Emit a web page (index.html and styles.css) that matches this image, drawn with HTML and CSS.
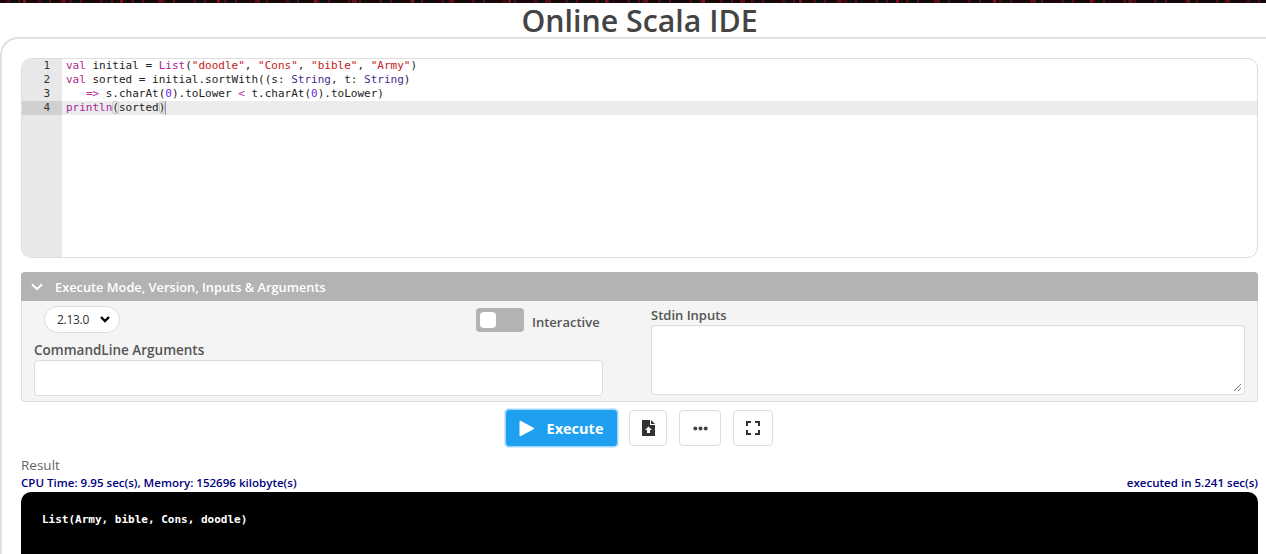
FILE: index.html
```html
<!DOCTYPE html>
<html lang="en">
<head>
<meta charset="utf-8">
<title>Online Scala IDE</title>
<link rel="stylesheet" href="styles.css">
</head>
<body>
<div class="topstrip"></div>
<h1 class="title">Online Scala IDE</h1>
<main class="card">
  <section class="editor">
    <div class="gutter">
      <div class="num">1</div><div class="num">2</div><div class="num">3</div><div class="num active">4</div>
    </div>
    <div class="code">
      <div class="line"><span class="kw">val</span> initial = <span class="fn">List</span>(<span class="str">"doodle"</span>, <span class="str">"Cons"</span>, <span class="str">"bible"</span>, <span class="str">"Army"</span>)</div>
      <div class="line"><span class="kw">val</span> sorted = initial.sortWith((s: <span class="ty">String</span>, t: <span class="ty">String</span>)</div>
      <div class="line">   <span class="kw">=&gt;</span> s.charAt(<span class="lit">0</span>).toLower <span class="kw">&lt;</span> t.charAt(<span class="lit">0</span>).toLower)</div>
      <div class="line active"><span class="fn">println</span><span class="br">(</span>sorted<span class="br">)</span><span class="cursor"></span></div>
    </div>
  </section>

  <section class="panel">
    <header class="panel-head">
      <svg class="chev" width="12" height="8" viewBox="0 0 12 8"><path d="M1 1.2 6 6.2 11 1.2" fill="none" stroke="#fff" stroke-width="2"/></svg>
      <span>Execute Mode, Version, Inputs &amp; Arguments</span>
    </header>
    <div class="panel-body">
      <div class="col-left">
        <div class="top-row">
          <div class="select"><span>2.13.0</span>
            <svg width="10" height="7" viewBox="0 0 10 7"><path d="M1 1 5 5 9 1" fill="none" stroke="#000" stroke-width="2.4"/></svg>
          </div>
          <div class="toggle-wrap">
            <div class="toggle"><div class="knob"></div></div>
            <span class="label interactive">Interactive</span>
          </div>
        </div>
        <div class="label args-label">CommandLine Arguments</div>
        <div class="field args"></div>
      </div>
      <div class="col-right">
        <div class="label">Stdin Inputs</div>
        <div class="field stdin">
          <svg class="grip" width="9" height="9" viewBox="0 0 9 9"><path d="M1 8 8 1M5 8 8 5" stroke="#777" stroke-width="1" fill="none"/></svg>
        </div>
      </div>
    </div>
  </section>

  <div class="actions">
    <button class="exec">
      <svg width="16" height="17" viewBox="0 0 16 17"><path d="M1 1 15 8.5 1 16Z" fill="#fff" stroke="#fff" stroke-linejoin="round"/></svg>
      <span>Execute</span>
    </button>
    <button class="icon-btn b1">
      <svg width="13" height="16" viewBox="0 0 13 16"><path d="M0 0H8V5H13V16H0Z M9 0 13 4H9Z" fill="#333"/><path d="M6.5 6.5 10 10H8V13H5V10H3Z" fill="#fff"/></svg>
    </button>
    <button class="icon-btn b2">
      <svg width="15" height="5" viewBox="0 0 15 5" fill="#444"><circle cx="2.3" cy="2.5" r="2"/><circle cx="7.5" cy="2.5" r="2"/><circle cx="12.7" cy="2.5" r="2"/></svg>
    </button>
    <button class="icon-btn b3">
      <svg width="14" height="14" viewBox="0 0 14 14"><path d="M1 5V1H5M9 1H13V5M13 9V13H9M5 13H1V9" fill="none" stroke="#333" stroke-width="2"/></svg>
    </button>
  </div>

  <section class="result">
    <div class="result-title">Result</div>
    <div class="stats"><span>CPU Time: 9.95 sec(s), Memory: 152696 kilobyte(s)</span><span>executed in 5.241 sec(s)</span></div>
    <div class="terminal"><span class="term-text">List(Army, bible, Cons, doodle)</span></div>
  </section>
</main>
</body>
</html>
```

FILE: styles.css
```css
* { box-sizing: border-box; }
html, body { margin: 0; padding: 0; height: 554px; overflow: hidden; background: #fff; }
body { font-family: "Open Sans", "Liberation Sans", sans-serif; color: #444; }

.topstrip {
  height: 3px;
  background:
    repeating-linear-gradient(90deg, transparent 0 23px, #7a0f20 23px 26px, transparent 26px 61px, #5a0c18 61px 66px, transparent 66px 97px),
    repeating-linear-gradient(90deg, #1a0507 0 7px, #430b14 7px 10px, #0d0d0d 10px 18px, #51101a 18px 20px, #150808 20px 31px);
}
.title {
  margin: 0;
  height: 34px;
  padding-left: 13px;
  text-align: center;
  font-size: 30.3px;
  line-height: 36px;
  font-weight: 600;
  color: #444;
}
.card {
  height: 530px;
  margin-right: -20px;
  border: 2px solid #e0e0e0;
  border-right: 0;
  border-bottom: 0;
  border-top-left-radius: 18px;
  border-top-right-radius: 18px;
  padding: 19px 28px 0 19px;
}

.editor {
  display: flex;
  height: 200px;
  border: 1px solid #ddd;
  border-radius: 10px;
  overflow: hidden;
  background: #fff;
}
.gutter { width: 40px; background: #e8e8e8; font: 11px/14px "DejaVu Sans Mono", monospace; color: #333; flex: none; }
.num { height: 14px; padding-right: 12px; text-align: right; }
.num.active { background: #d0d0d0; }
.code { flex: 1; font: 11px/14px "DejaVu Sans Mono", monospace; color: #222; }
.line { height: 14px; padding-left: 4px; white-space: pre; }
.line.active { background: #ececec; }
.kw { color: #b5288f; }
.fn { color: #a8249a; }
.str { color: #c41a1a; }
.ty { color: #4b2a8c; }
.lit { color: #6a2ae0; }
.br { outline: 1px solid #c4c4c4; outline-offset: -1px; border-radius: 3px; }
.cursor { display: inline-block; width: 1px; height: 14px; background: #999; vertical-align: top; }

.panel { margin-top: 14px; border: 1px solid #ddd; border-top: 0; border-radius: 4px; background: #f4f4f4; height: 130px; }
.panel-head {
  height: 29px;
  margin: 0 -1px;
  display: flex;
  align-items: center;
  gap: 12px;
  padding-left: 10px;
  background: #b3b3b3;
  border-radius: 4px 4px 0 0;
  color: #fff;
  font-size: 12.8px;
  font-weight: 600;
}
.panel-body { display: flex; height: 100px; }
.col-left { width: 581px; padding: 5px 0 0 12px; flex: none; }
.top-row { display: flex; height: 31px; }
.select {
  margin-left: 10px;
  width: 76px; height: 27px;
  display: flex; align-items: center; gap: 11px;
  padding-left: 12px;
  background: #fff;
  border: 1px solid #ddd;
  border-radius: 14px;
  font-size: 12px;
  color: #333;
  letter-spacing: -0.3px;
}
.toggle-wrap { margin-left: 356px; display: flex; align-items: center; gap: 8px; height: 24px; margin-top: 2px; white-space: nowrap; }
.toggle { width: 48px; height: 24px; border-radius: 4px; background: #b3b3b3; padding: 4px; flex: none; }
.knob { width: 16px; height: 16px; border-radius: 4px; background: #fff; }
.label { font-size: 13px; font-weight: 600; color: #555; line-height: 18px; }
.interactive { padding-top: 4px; }
.args-label { margin-top: 4px; font-size: 13.5px; }
.field { background: #fff; border: 1px solid #ddd; border-radius: 4px; box-shadow: inset 0 1px 1px rgba(0,0,0,.03); }
.args { height: 36px; width: 569px; margin-top: 1px; }
.col-right { flex: 1; padding: 5px 12px 0 48px; }
.col-right .label { height: 18px; }
.stdin { height: 70px; margin-top: 1px; position: relative; }
.grip { position: absolute; right: 2px; bottom: 2px; }

.actions { display: flex; align-items: flex-start; justify-content: center; margin-top: 7px; height: 39px; padding-right: 1px; }
button { padding: 0; font-family: inherit; display: flex; align-items: center; justify-content: center; background: #fff; border: 1px solid #ddd; border-radius: 4px; }
.exec {
  width: 113px; height: 38px;
  gap: 12px;
  background: #1f9ff0;
  border: 1px solid #9fd6fa;
  box-shadow: 0 0 0 1px #d3ecfd;
  color: #fff;
  font-size: 14.5px;
  font-weight: 700;
  padding-right: 1px;
}
.icon-btn { height: 36px; margin-top: 1px; }
.b1 { width: 38px; margin-left: 11px; }
.b2 { width: 42px; margin-left: 12px; }
.b3 { width: 40px; margin-left: 12px; }

.result { margin-top: 8px; }
.result-title { font-size: 13.5px; line-height: 18px; color: #666; }
.stats { display: flex; justify-content: space-between; font-size: 11.55px; font-weight: 600; line-height: 14px; color: #00007f; margin-top: 2px; }
.terminal { height: 80px; margin-top: 2px; background: #000; border-radius: 10px 10px 0 0; padding: 14px 0 0 21px; }
.term-text { font: 700 11px/16px "DejaVu Sans Mono", monospace; color: #fff; white-space: pre; }
```
